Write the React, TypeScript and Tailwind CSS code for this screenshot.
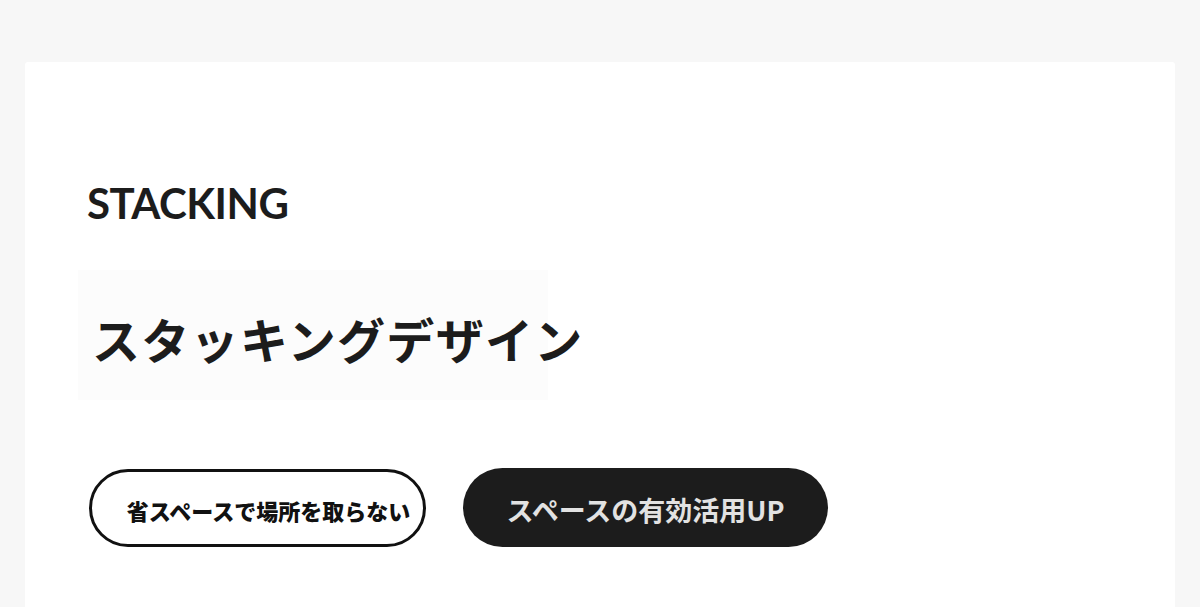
export default function App() {
  return (
    <div className="min-h-screen bg-[#f7f7f7] px-[25px] pt-[62px]" style={{ fontFamily: 'Lato, "Noto Sans CJK JP", sans-serif' }}>
      <div className="bg-white rounded-t-[3px] min-h-[545px] pl-[62px] pt-[120px]">
        <h1 className="text-[42px] font-bold leading-none text-[#1c1c1c] tracking-[-0.5px]">STACKING</h1>
        <div className="mt-[46px] -ml-[9px] w-[470px] h-[130px] bg-[#fcfcfc] flex items-center pl-[14px] pt-[6px]">
          <h2
            className="text-[48px] font-bold leading-none text-[#1c1c1c] tracking-[1.3px] whitespace-nowrap"
            style={{ fontFamily: '"Noto Sans CJK JP", sans-serif' }}
          >
            スタッキングデザイン
          </h2>
        </div>
        <div className="mt-[68px] flex gap-[37px] items-center" style={{ fontFamily: '"Noto Sans CJK JP", sans-serif' }}>
          <button className="h-[78px] w-[337px] ml-[2px] rounded-full border-[3px] border-[#111] bg-white flex items-center justify-center pl-[22px] pt-[6px] text-[22px] font-black text-[#111] whitespace-nowrap">
            省スペースで場所を取らない
          </button>
          <button className="h-[79px] w-[365px] rounded-full bg-[#1c1c1c] flex items-center justify-center pt-[6px] text-[27px] font-bold text-[#e2e2e2] whitespace-nowrap">
            スペースの有効活用UP
          </button>
        </div>
      </div>
    </div>
  );
}
